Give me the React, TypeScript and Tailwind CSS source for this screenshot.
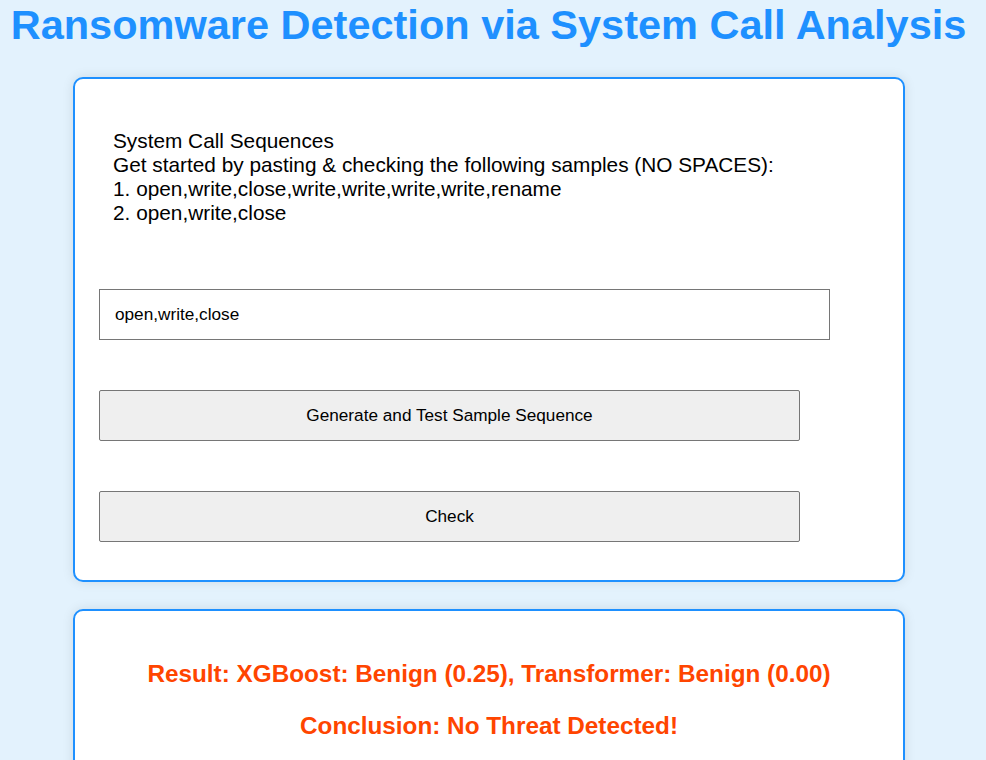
import { useState } from "react";

const samples = [
  "open,write,close,write,write,write,write,rename",
  "open,write,close",
];

export default function App() {
  const [sequence, setSequence] = useState("open,write,close");

  return (
    <div className="min-h-screen bg-[#e3f2fd] font-['Liberation_Sans',Arial,sans-serif] text-black">
      <h1 className="w-[977px] pt-[1px] text-center text-[41.5px] font-bold leading-[48px] text-[#1e90ff]">
        Ransomware Detection via System Call Analysis
      </h1>

      {/* Input card */}
      <div className="mt-[28px] ml-[73px] w-[832px] rounded-[10px] border-2 border-[#1e90ff] bg-white px-[24px] pt-[50px] pb-[38px] shadow-[0_0_12px_rgba(0,0,0,0.1)]">
        <div className="px-[14px] text-[20.8px] leading-[24px]">
          <div>System Call Sequences</div>
          <div>Get started by pasting &amp; checking the following samples (NO SPACES):</div>
          {samples.map((s, i) => (
            <div key={s}>
              {i + 1}. {s}
            </div>
          ))}
        </div>

        <input
          value={sequence}
          onChange={(e) => setSequence(e.target.value)}
          className="mt-[64px] block h-[51px] w-[731px] border border-[#767676] bg-white px-[15px] text-[17.2px] outline-none"
        />

        <button className="mt-[50px] block h-[51px] w-[701px] rounded-[2px] border border-[#767676] bg-[#efefef] text-[17.2px]">
          Generate and Test Sample Sequence
        </button>
        <button className="mt-[50px] block h-[51px] w-[701px] rounded-[2px] border border-[#767676] bg-[#efefef] text-[17.2px]">
          Check
        </button>
      </div>

      {/* Result card */}
      <div className="mt-[27px] ml-[73px] w-[832px] rounded-[10px] border-2 border-[#1e90ff] bg-white pt-[49px] pb-[40px] text-center text-[24.3px] font-bold leading-[28px] text-[#ff4500] shadow-[0_0_12px_rgba(0,0,0,0.1)]">
        <p>Result: XGBoost: Benign (0.25), Transformer: Benign (0.00)</p>
        <p className="mt-[24px]">Conclusion: No Threat Detected!</p>
      </div>
    </div>
  );
}
